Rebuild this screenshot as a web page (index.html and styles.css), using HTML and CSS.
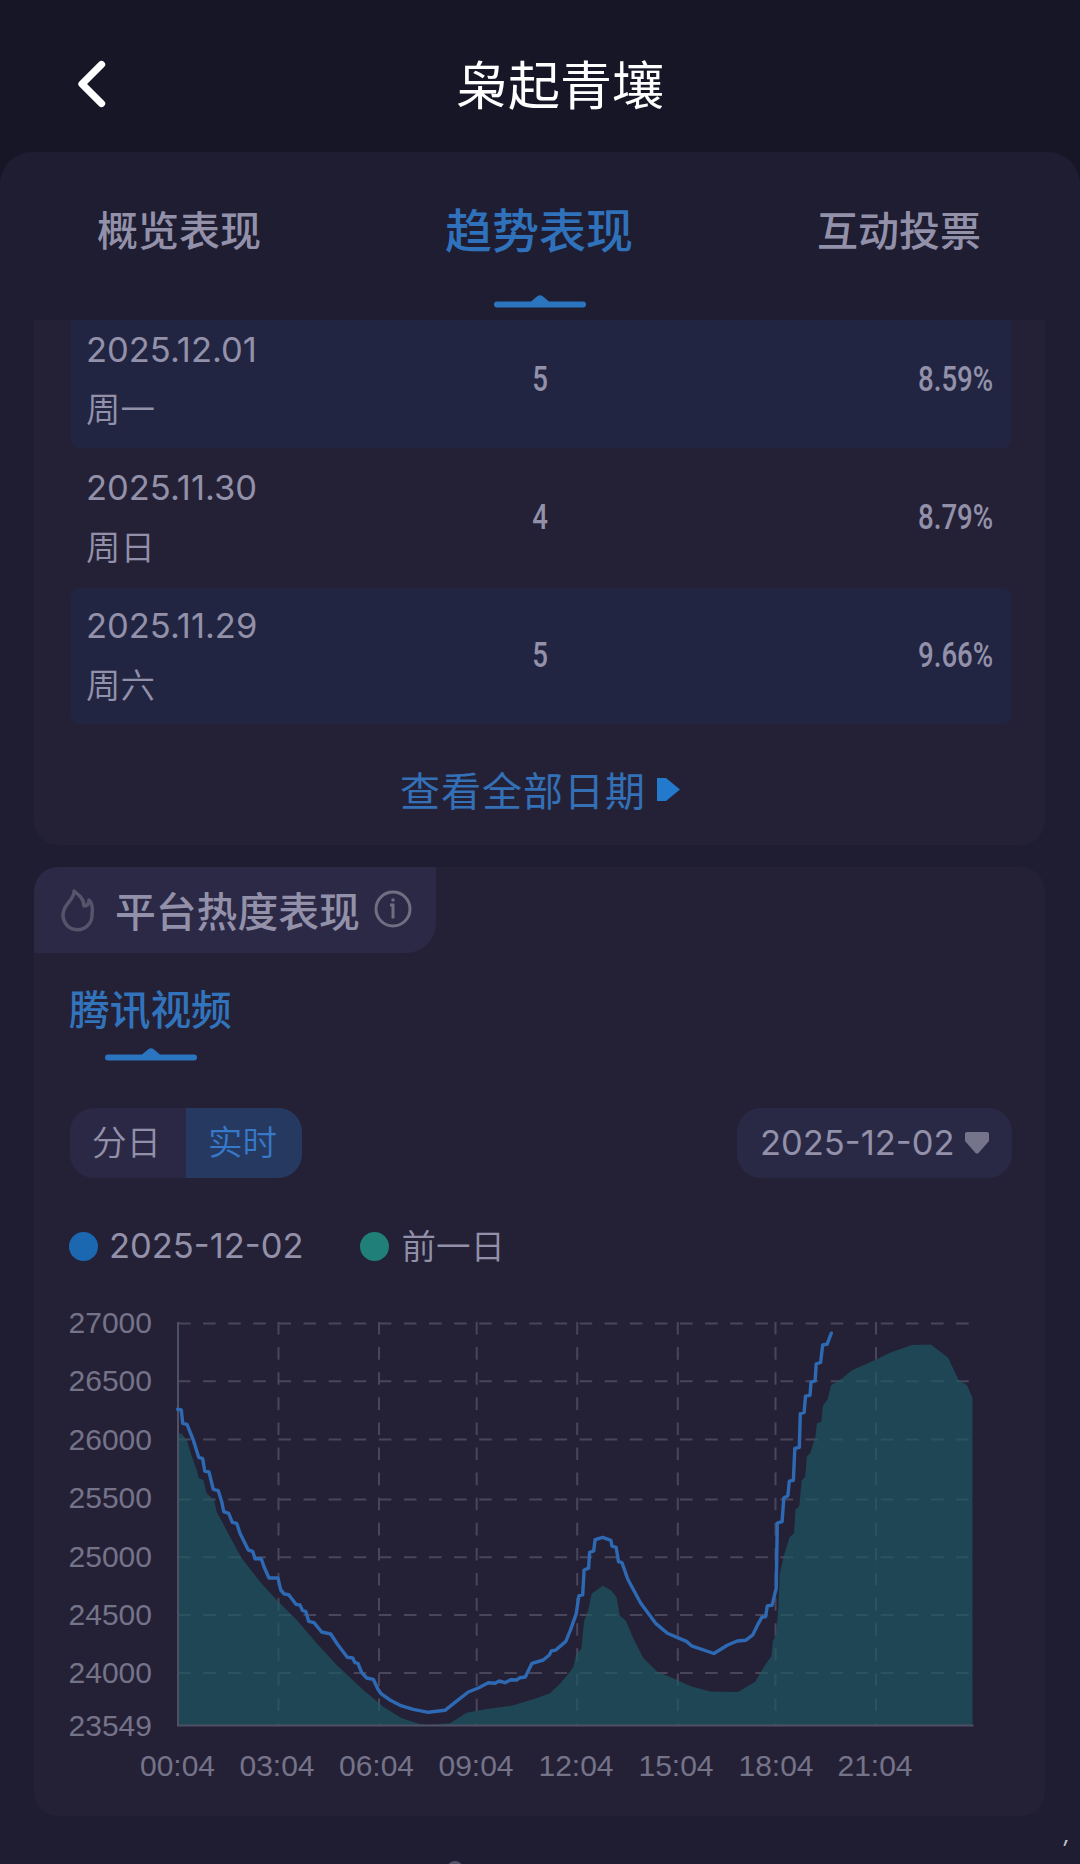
FILE: index.html
```html
<!DOCTYPE html>
<html lang="zh-CN">
<head>
<meta charset="utf-8">
<title>枭起青壤</title>
<link rel="stylesheet" href="styles.css">
</head>
<body>
<header class="topbar">
  <svg class="back" viewBox="0 0 30 50" aria-label="返回"><path d="M27.500 4.500 8 24 27.500 43.500"/></svg>
  <h1 class="title">枭起青壤</h1>
</header>
<main class="panel">
  <nav class="tabs">
    <a class="tab">概览表现</a>
    <a class="tab tab-active">趋势表现
      <svg class="marker" viewBox="0 0 92 13"><path d="M3 6.5H37L43 1.5Q46-1 49 1.5L55 6.5H89A3 3 0 0 1 89 12.5H3A3 3 0 0 1 3 6.5Z"/></svg>
    </a>
    <a class="tab">互动投票</a>
  </nav>

  <section class="card daily">
    <div class="row row-tint"><div class="day"><span>2025.12.01</span><span class="week">周一</span></div><b class="num count">5</b><b class="num rate">8.59%</b></div>
    <div class="row"><div class="day"><span>2025.11.30</span><span class="week">周日</span></div><b class="num count">4</b><b class="num rate">8.79%</b></div>
    <div class="row row-tint"><div class="day"><span>2025.11.29</span><span class="week">周六</span></div><b class="num count">5</b><b class="num rate">9.66%</b></div>
    <a class="all-dates">查看全部日期<svg class="play" viewBox="0 0 23 23"><path d="M0 0H9L23 11.5 9 23H0Z"/></svg></a>
  </section>

  <section class="card heat">
    <div class="badge">
      <svg class="flame" viewBox="0 0 34 40"><path d="M13 2C14 9 5 14 3 21A14.5 14.5 0 1 0 31 25C32 19 31 14 28 11C28 15 26 17 23 17C23 10 18 6 13 2Z"/></svg>
      <h2 class="badge-title">平台热度表现</h2>
      <svg class="info" viewBox="0 0 38 38"><circle cx="19" cy="19" r="17"/><path d="M19 8.500v3M16 15h3V28.500"/></svg>
    </div>
    <a class="platform">腾讯视频</a>
    <svg class="marker marker-platform" viewBox="0 0 92 13"><path d="M3 6.500H37L43 1.500Q46-1 49 1.500L55 6.500H89A3 3 0 0 1 89 12.500H3A3 3 0 0 1 3 6.500Z"/></svg>
    <div class="controls">
      <div class="segment"><span class="seg">分日</span><span class="seg seg-on">实时</span></div>
      <div class="picker"><span>2025-12-02</span><svg class="drop" viewBox="0 0 24 22"><path d="M2 0H22Q24 0 24 2V9L13.500 21Q12 22 10.500 21L0 9V2Q0 0 2 0Z"/></svg></div>
    </div>
    <div class="legend">
      <span class="key"><i class="dot dot-blue"></i>2025-12-02</span>
      <span class="key"><i class="dot dot-green"></i><span class="prev">前一日</span></span>
    </div>
    <svg class="chart" viewBox="-101 0 942 480">
      <g class="grid">
        <path d="M8 13.500H803M8 71.300H803M8 129.500H803M8 189.500H803M8 247.300H803M8 305H803M8 363H803"/>
        <path d="M108.500 12V415M209 12V415M306.700 12V415M407.200 12V415M507.800 12V415M605.500 12V415M706 12V415"/>
      </g>
      <path class="area" d="M8 123.300 12 124 16.700 130 22 147 26.700 160 28.700 168 33.300 170 36.700 183.300 44 190 46.700 201.700 61.700 230 71.700 248.300 90 271.700 108.300 291.700 126.700 310 146.700 333.300 166.700 355 193.300 380 213.300 396.700 231.700 408.300 250 414 258 415 280 413.300 296.700 402.700 316.700 399 341.700 395.700 363.300 389.300 380 383.300 390.700 373 399.300 362.500 403.400 357 406.200 344.200 411.300 338.700 414.100 311.300 418.200 300.300 421.700 283.800 432.700 275.800 440.600 280.100 446.400 286.700 449.900 305.800 456 311 463 327.700 473.300 347.900 487.100 361.800 502.600 368 521.500 376.400 540.500 381.500 568 381.900 585.200 371.700 593.800 357 601.400 346 602.800 331.400 606 324 608.300 298.400 609.700 263.700 614.500 243.500 619.700 227.100 624 223.400 625.500 199.600 629.300 196 631.700 170.300 635.200 166.700 636.900 146.500 640.300 142.900 645.500 126.400 646.900 113.600 651.300 111.800 653 95.300 657.500 89.800 661 75.200 673 67.800 681.600 60.500 704 50.600 721.200 42.200 741.900 34.900 760.800 34.500 778.100 47.700 788.400 69.700 797 75.200 802.500 88V415.500H8Z"/>
      <path class="axis" d="M8 12V415.500H803.500"/>
      <path class="today" d="M7.700 99.300 11.300 100 12.700 113.300 17 114.300 23.300 130 28.700 147.300 32.700 148.700 34.700 161 39 162 43.300 179.300 48.300 180.700 51.700 191.700 53.700 201.700 58.700 203.300 62.300 212.300 66.700 213.300 70 223.300 78.300 240 82.700 241.300 85 248.700 91.300 248.700 94 256.700 99 268 108 268 110.700 280 114.300 284 118.700 284.700 126 294.300 130 295 132.700 300.700 135.700 301.300 138.700 311.300 144 312.700 151.700 322 160.700 324 167.300 334 177.300 347.300 182.700 348 185 352.700 188 353.300 191.700 362.700 196.700 368 203.300 369.300 208 379.300 210.700 383.300 220 390 230 395.300 243.300 399.300 258.300 402.300 275 400.300 285 392.300 298.300 382 308.300 378 318.300 372.700 325 373.300 329.300 371 335 372.700 340.700 369.700 346.700 370 350 367.700 355.300 367 362 353.300 373.300 350 379.300 345 381.300 341 385.500 340.200 395.800 331.400 400.300 320.400 406.200 303.900 408.900 285.600 412.700 284.900 414.100 260 418.600 258.200 419.600 242.400 423.700 241 425.100 229.600 432.700 227.400 440.900 230.400 442 236.200 446.100 237.300 448.500 251.600 452 252.700 457.800 269.200 470.600 293 485.400 313.100 497.400 323.300 516.400 331.400 521.500 335.800 543.900 343.500 557.700 335 567.300 331 575.600 330.300 582.800 324.800 587.600 314.900 592.100 306.900 595.500 306.900 597.300 295.900 602.100 295.200 606.200 278.300 607.300 213.200 612.100 211.700 613.800 187.900 617.900 185.700 619.300 171.100 623.400 170.300 624.800 138.500 629.300 137.400 630.300 103.700 634.100 102.300 635.500 86.100 640 85.400 641 72.200 645.100 70.800 646.200 53.900 650.600 52.500 652.700 34.900 657.200 34.200 661.300 23.200"/>
      <g class="label label-y">
        <text x="-18" y="22.500">27000</text><text x="-18" y="81">26500</text><text x="-18" y="139.500">26000</text><text x="-18" y="198">25500</text>
        <text x="-18" y="256.500">25000</text><text x="-18" y="314.500">24500</text><text x="-18" y="373">24000</text><text x="-18" y="425.500">23549</text>
      </g>
      <g class="label label-x">
        <text x="7.500" y="466">00:04</text><text x="107" y="466">03:04</text><text x="206.500" y="466">06:04</text><text x="306" y="466">09:04</text>
        <text x="406" y="466">12:04</text><text x="506" y="466">15:04</text><text x="606" y="466">18:04</text><text x="705" y="466">21:04</text>
      </g>
    </svg>
  </section>
  <footer class="foot"><i class="foot-dot"></i><span class="foot-mark">,</span></footer>
</main>
</body>
</html>
```

FILE: styles.css
```css
* { box-sizing: border-box; }
body {
  margin: 0;
  width: 1080px;
  height: 1864px;
  overflow: hidden;
  background: #171627;
  color: #9391aa;
  font-family: Inter, "Noto Sans CJK SC", sans-serif;
  font-size: 34.500px;
}
svg { display: block; flex: none; overflow: visible; }
h1, h2 { margin: 0; font-weight: 400; }

.topbar { height: 152px; padding: 18px 0 0 74px; display: flex; align-items: center; }
.back { width: 30px; height: 50px; fill: none; stroke: #fff; stroke-width: 7.300; stroke-linecap: round; stroke-linejoin: round; }
.title { margin-left: 352px; color: #fff; font-size: 52px; line-height: 76px; margin-top: 4px; }

.panel { height: 1712px; padding: 0 34px; background: #1f1d31; border-radius: 32px 32px 0 0; display: flex; flex-direction: column; }
.tabs { height: 168px; flex: none; display: flex; justify-content: space-between; padding: 0 65px 0 63px; font-size: 41px; font-weight: 500; line-height: 158px; }
.tab-active { font-size: 47px; line-height: 157px; color: #2f72bb; display: flex; flex-direction: column; align-items: center; }
.tab-active .marker { margin: -14px 0 0 2px; }
.marker { width: 92px; height: 13px; fill: #2b74c0; }

.card { background: #242137; flex: none; overflow: hidden; width: 1011px; }
.daily { height: 525px; padding: 0 34px 0 37px; border-radius: 0 0 24px 24px; display: flex; flex-direction: column; gap: 2px; }
.row { height: 136px; flex: none; padding: 8px 18px 8px 15px; display: grid; grid-template-columns: 1fr 40px 1fr; align-items: center; border-radius: 8px; }
.row:first-child { margin-top: -8px; }
.row-tint { background: #222542; }
.day { display: flex; flex-direction: column; line-height: 60px; white-space: nowrap; }
.week { font-weight: 350; }
.num { font-family: Roboto, sans-serif; font-weight: 500; font-size: 35px; line-height: 40px; transform: scaleX(.79); }
.count { text-align: center; }
.rate { justify-self: end; transform-origin: right; }
.all-dates { margin-top: 36px; height: 60px; line-height: 60px; font-size: 40px; letter-spacing: 1px; color: #3370b6; display: flex; justify-content: center; align-items: center; gap: 11px; padding-right: 2px; }
.play { width: 23px; height: 23px; fill: #2379cb; margin-top: -5px; }

.heat { margin-top: 22px; height: 949px; border-radius: 24px; display: flex; flex-direction: column; }
.badge { width: 402px; height: 86px; flex: none; background: #2b2945; border-radius: 24px 0 30px 0; display: flex; align-items: center; padding: 0 24px 0 27px; }
.badge-title { margin: -1px 14px 0 20px; font-size: 40.800px; font-weight: 500; white-space: nowrap; }
.flame { width: 34px; height: 40px; margin-top: -3px; fill: none; stroke: #56536b; stroke-width: 3.500; stroke-linejoin: round; }
.info { width: 38px; height: 38px; margin-top: -2px; fill: none; stroke: #706e83; stroke-width: 3; }
.platform { margin: 28px 0 0 35px; font-size: 40.700px; line-height: 60px; font-weight: 500; color: #3274bc; }
.marker-platform { margin: 7px 0 0 71px; }
.controls { margin: 47px 33px 0 36px; height: 70px; display: flex; justify-content: space-between; }
.segment { width: 232px; display: flex; border-radius: 24px; overflow: hidden; background: #2b2845; }
.seg { flex: 1; text-align: center; line-height: 69px; font-weight: 350; padding-right: 3px; }
.seg-on { background: #263960; color: #3678c9; }
.picker { width: 275px; border-radius: 24px; background: #2a2945; display: flex; align-items: center; justify-content: space-between; padding: 0 23px; }
.picker span { margin-top: -2px; }
.drop { width: 24px; height: 22px; fill: #75748b; }
.legend { margin: 38px 0 0 35px; height: 60px; display: flex; gap: 57px; line-height: 60px; }
.key { display: flex; align-items: center; gap: 11px; }
.dot { width: 29px; height: 29px; border-radius: 50%; }
.dot-blue { background: #1b68b1; }
.dot-green { background: #207f78; }
.prev { margin: 1px 0 0 1px; font-weight: 350; }
.chart { width: 942px; height: 480px; margin: 34px 0 0 35px; }
.grid { fill: none; stroke: #49465a; stroke-width: 2; stroke-dasharray: 12.600 12.500; }
.area { fill: #1c5a62; fill-opacity: .67; }
.axis { fill: none; stroke: #4e5166; stroke-width: 2; }
.today { fill: none; stroke: #2e69b4; stroke-width: 3.400; stroke-linejoin: round; stroke-linecap: round; }
.label { font-family: "Liberation Sans", Arial, sans-serif; font-size: 30px; fill: #757388; }
.label-y { text-anchor: end; }
.label-x { text-anchor: middle; }

.foot { height: 48px; display: flex; justify-content: space-between; padding: 0 0 0 413px; overflow: hidden; margin-right: -24px; }
.foot-dot { width: 16px; height: 16px; border-radius: 50%; background: #55536a; margin-top: 45px; }
.foot-mark { font-size: 22px; line-height: 36px; font-style: italic; color: #c9c8d2; }
```
